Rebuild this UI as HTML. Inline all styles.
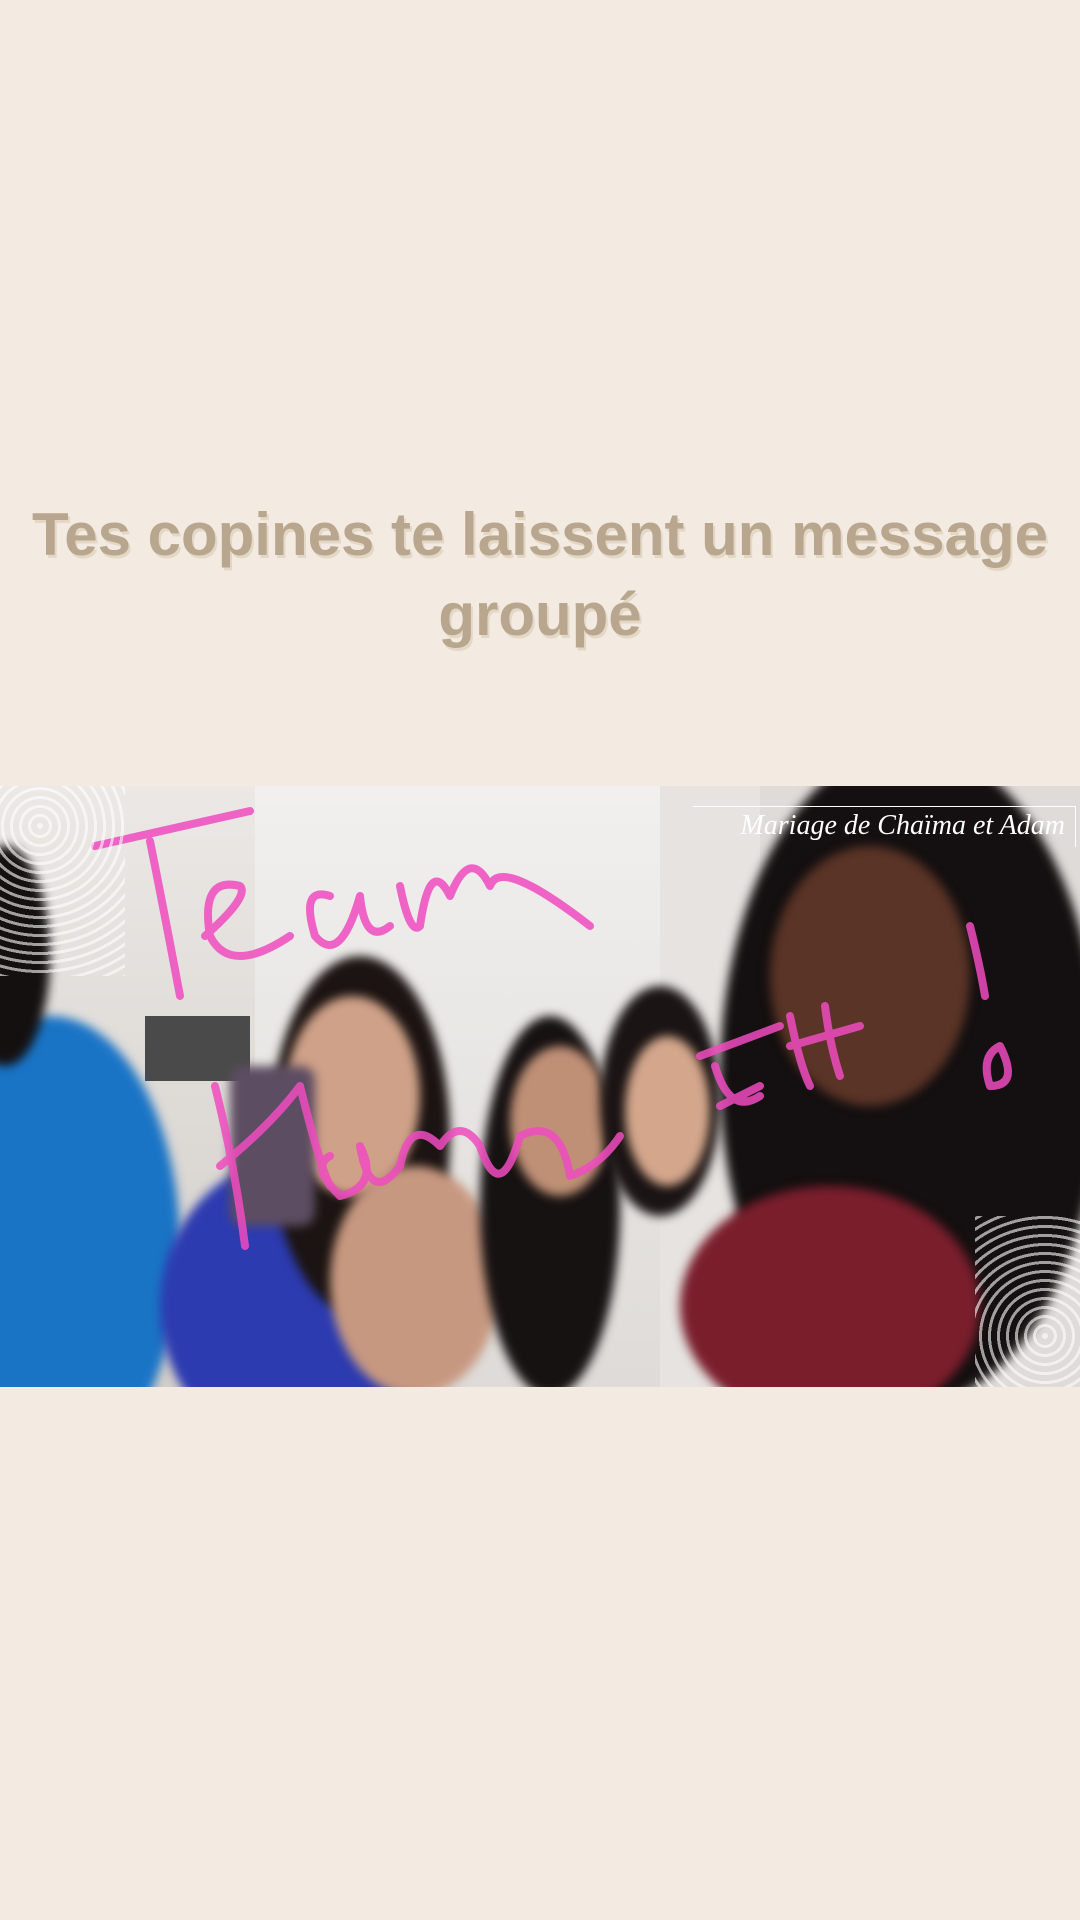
<!DOCTYPE html>
<html><head><meta charset="utf-8">
<style>
html,body{margin:0;padding:0}
body{width:1080px;height:1920px;background:#f3ebe1;position:relative;overflow:hidden;font-family:"Liberation Sans",sans-serif}
.t{position:absolute;left:0;width:1080px;text-align:center;color:#b9a68e;font-weight:bold;font-size:60px;letter-spacing:0px;text-shadow:2px 3px 0 #e3d7c6}
.photo{position:absolute;left:0;top:786px;width:1080px;height:601px;overflow:hidden;background:#dedbd8}
.b{position:absolute;border-radius:50%;filter:blur(5px)}
.r{position:absolute}
</style></head><body>
<div class="t" style="top:500px">Tes copines te laissent un message</div>
<div class="t" style="top:580px">groupé</div>
<div class="photo">
  <div class="r" style="left:0;top:0;width:260px;height:601px;background:linear-gradient(#ebe8e5,#d3cec9)"></div>
  <div class="r" style="left:255px;top:0;width:420px;height:601px;background:linear-gradient(#f1f0ee,#dedbd8)"></div>
  <div class="r" style="left:660px;top:0;width:100px;height:601px;background:#e6e3e0"></div>
  <div class="r" style="left:145px;top:230px;width:105px;height:65px;background:#4a4a4a"></div>
  <div class="b" style="left:-80px;top:230px;width:260px;height:460px;background:#1a74c6"></div>
  <div class="b" style="left:-40px;top:60px;width:90px;height:220px;background:#151010"></div>
  <div class="b" style="left:160px;top:370px;width:280px;height:300px;background:#2c3bb0"></div>
  <div class="b" style="left:270px;top:170px;width:180px;height:360px;background:#1c1412"></div>
  <div class="b" style="left:285px;top:210px;width:135px;height:200px;background:#cfa188"></div>
  <div class="b" style="left:330px;top:380px;width:170px;height:230px;background:#c79880"></div>
  <div class="b" style="left:230px;top:280px;width:85px;height:160px;background:#5d4d62;border-radius:14px"></div>
  <div class="b" style="left:480px;top:230px;width:140px;height:380px;background:#171212"></div>
  <div class="b" style="left:510px;top:260px;width:100px;height:150px;background:#bf9076"></div>
  <div class="b" style="left:600px;top:200px;width:120px;height:230px;background:#1b1414"></div>
  <div class="b" style="left:625px;top:250px;width:85px;height:150px;background:#d4a78c"></div>
  <div class="b" style="left:720px;top:-40px;width:380px;height:660px;background:#140f10"></div>
  <div class="b" style="left:770px;top:60px;width:200px;height:260px;background:#5a3426"></div>
  <div class="b" style="left:680px;top:400px;width:300px;height:240px;background:#7a1e2c"></div>
  <svg class="r" style="left:0;top:0" width="1080" height="601" fill="none" stroke="#f04cc0" stroke-width="8" stroke-linecap="round" stroke-linejoin="round" opacity="0.85">
    <path d="M95 60 L250 25 M150 55 Q165 130 180 210"/>
    <path d="M205 150 Q250 110 240 100 Q200 90 210 150 Q230 190 290 150"/>
    <path d="M330 110 Q300 100 315 150 Q340 180 360 110 Q365 160 390 140"/>
    <path d="M400 100 Q410 150 420 140 Q430 70 450 110 Q470 60 490 100 Q500 70 590 140"/>
    <path d="M215 300 Q235 380 245 460 M220 380 Q270 340 300 300 Q320 380 330 400"/>
    <path d="M330 370 Q310 380 340 410 Q380 400 360 360 Q370 420 400 380 Q410 330 440 360 Q460 330 480 360 Q500 420 520 350 Q560 330 570 390 Q600 380 620 350"/>
    <path d="M700 270 L780 240 M715 280 Q730 330 760 310 M720 320 L760 300 M790 230 Q800 280 810 300 M825 220 Q830 260 840 290 M790 260 L860 240"/>
    <path d="M970 140 Q980 180 985 210 M1000 260 Q980 270 990 300 Q1020 300 1000 260"/>
  </svg>
  <div class="r" style="left:693px;top:20px;width:382px;height:40px;border-top:1.5px solid #fff;border-right:1.5px solid #fff"></div>
  <div class="r" style="left:695px;top:24px;width:370px;text-align:right;color:#fff;font-family:'Liberation Serif',serif;font-style:italic;font-size:28px">Mariage de Chaïma et Adam</div>
  <div class="r" style="left:0;top:0;width:125px;height:190px;background:repeating-radial-gradient(circle at 40px 40px,#fff 0 3px,transparent 3px 9px);opacity:.6"></div>
  <div class="r" style="left:975px;top:430px;width:105px;height:171px;background:repeating-radial-gradient(circle at 70px 120px,#fff 0 3px,transparent 3px 9px);opacity:.6"></div>
</div>
</body></html>
